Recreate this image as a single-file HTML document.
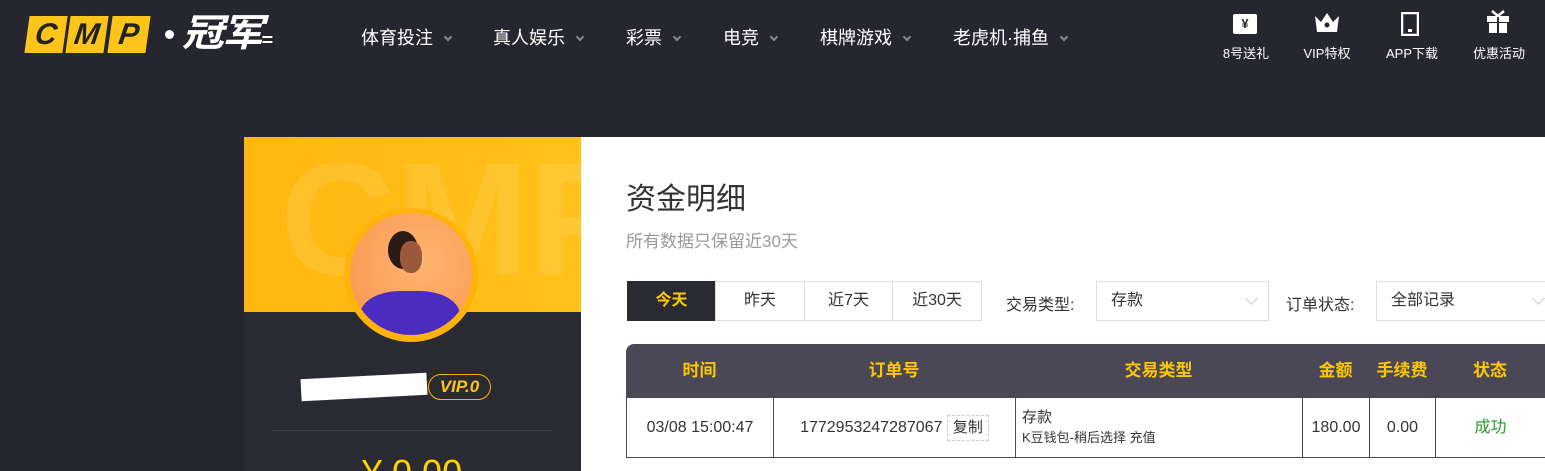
<!DOCTYPE html>
<html><head><meta charset="utf-8"><style>
*{margin:0;padding:0;box-sizing:border-box}
html,body{width:1545px;height:471px;overflow:hidden}
body{background:#262631;font-family:"Liberation Sans","Noto Sans CJK SC",sans-serif;position:relative}
.a{position:absolute}
.nav{color:#fff;font-size:18px;top:24px}
.nav i{display:inline-block;width:6px;height:6px;border-right:2px solid #8a8a96;border-bottom:2px solid #8a8a96;transform:rotate(45deg);margin-left:12px;position:relative;top:-4px}
.ic{color:#fff;font-size:13px;top:43px;text-align:center;width:80px}
.tab{top:281px;height:40px;border:1px solid #ddd;font-size:16px;text-align:center;line-height:38px;color:#333;background:#fff}
.sel{top:281px;height:40px;border:1px solid #ddd;font-size:16px;line-height:38px;color:#333;padding-left:14px;background:#fff}
.sel:after{content:"";position:absolute;right:12px;top:12px;width:8px;height:8px;border-right:1px solid #ccc;border-bottom:1px solid #ccc;transform:rotate(45deg)}
.th{top:344px;height:54px;line-height:54px;text-align:center;color:#ffc700;font-weight:bold;font-size:17px}
.td{top:398px;height:60px;border-left:1px solid #4a4857;border-bottom:1px solid #4a4857;font-size:16px;color:#333;text-align:center;line-height:60px}
.lb{position:absolute;top:16px;width:38px;height:37px;background:#ffc41a;transform:skewX(-8deg);font:italic 900 30px 'Liberation Sans',sans-serif;color:#222;line-height:37px;text-align:center}
</style></head><body>
<div class="lb" style="left:27px">C</div>
<div class="lb" style="left:68px">M</div>
<div class="lb" style="left:110px">P</div>
<div class="a" style="left:165px;top:30px;width:9px;height:9px;border-radius:50%;background:#fff"></div>
<div class="a" style="left:182px;top:12px;color:#fff;font-size:38px;font-weight:bold;font-style:italic;letter-spacing:-2px;line-height:44px;transform:scaleX(1.1);transform-origin:left">冠军<span style="font-size:18px;letter-spacing:0">=</span></div>
<div class="a nav" style="left:361px">体育投注<i></i></div>
<div class="a nav" style="left:493px">真人娱乐<i></i></div>
<div class="a nav" style="left:626px">彩票<i></i></div>
<div class="a nav" style="left:723px">电竞<i></i></div>
<div class="a nav" style="left:820px">棋牌游戏<i></i></div>
<div class="a nav" style="left:953px">老虎机·捕鱼<i></i></div>
<div class="a" style="left:1233px;top:14px;width:24px;height:20px;background:#fff;border-radius:2px;color:#262631;font-size:13px;text-align:center;line-height:20px;font-weight:bold">¥</div>
<svg class="a" style="left:1313px;top:10px" width="28" height="24"><path d="M2 6 L8 12 L14 3 L20 12 L26 6 L24 22 L4 22Z" fill="#fff"/><circle cx="14" cy="15" r="2.5" fill="#262631"/></svg>
<svg class="a" style="left:1401px;top:12px" width="18" height="24"><rect x="1" y="1" width="16" height="22" fill="none" stroke="#fff" stroke-width="2.5"/><rect x="7" y="17" width="4" height="3" fill="#fff"/></svg>
<svg class="a" style="left:1486px;top:10px" width="24" height="24"><rect x="1" y="6" width="22" height="6" fill="#fff"/><rect x="3" y="13" width="18" height="10" fill="#fff"/><rect x="11" y="6" width="2" height="18" fill="#262631"/><path d="M6 1 L12 6 L18 1" stroke="#fff" stroke-width="2.5" fill="none"/></svg>
<div class="a ic" style="left:1206px">8号送礼</div>
<div class="a ic" style="left:1287px">VIP特权</div>
<div class="a ic" style="left:1372px">APP下载</div>
<div class="a ic" style="left:1459px">优惠活动</div>
<div class="a" style="left:244px;top:137px;width:337px;height:334px;background:#2a2a33"></div>
<div class="a" style="left:244px;top:137px;width:337px;height:175px;background:linear-gradient(90deg,#ffb70f,#ffc21c);overflow:hidden"><div style="position:absolute;left:36px;top:-10px;font:bold 160px 'Liberation Sans',sans-serif;color:rgba(255,255,255,.1)">CMP</div></div>
<div class="a" style="left:344px;top:208px;width:134px;height:134px;border-radius:50%;background:#ffb20a"></div>
<div class="a" style="left:350px;top:213px;width:122px;height:122px;border-radius:50%;background:radial-gradient(circle at 60% 40%,#ffb470,#f7944c);overflow:hidden">
<div style="position:absolute;left:38px;top:18px;width:30px;height:38px;border-radius:50%;background:#2a1a14"></div>
<div style="position:absolute;left:50px;top:28px;width:22px;height:32px;border-radius:45%;background:#9a5a3a"></div>
<div style="position:absolute;left:10px;top:78px;width:100px;height:60px;border-radius:40% 40% 0 0;background:#4a2dc0"></div></div>
<div class="a" style="left:301px;top:376px;width:126px;height:22px;background:#fff;transform:rotate(-3deg)"></div>
<div class="a" style="left:428px;top:374px;width:63px;height:26px;border:1px solid #ffb20a;border-radius:13px;color:#ffc41a;font:italic bold 17px 'Liberation Sans',sans-serif;text-align:center;line-height:24px">VIP.0</div>
<div class="a" style="left:272px;top:430px;width:281px;height:1px;background:#3d3d48"></div>
<div class="a" style="left:362px;top:452px;color:#ffd200;font-size:36px">¥ 0.00</div>
<div class="a" style="left:581px;top:137px;width:964px;height:334px;background:#fff"></div>
<div class="a" style="left:626px;top:174px;font-size:30px;color:#333">资金明细</div>
<div class="a" style="left:626px;top:227px;font-size:17px;color:#999">所有数据只保留近30天</div>
<div class="a tab" style="left:627px;width:89px;background:#2a2a33;color:#ffc700;border-color:#2a2a33;font-weight:bold">今天</div>
<div class="a tab" style="left:715px;width:90px">昨天</div>
<div class="a tab" style="left:804px;width:89px">近7天</div>
<div class="a tab" style="left:892px;width:90px">近30天</div>
<div class="a" style="left:1006px;top:291px;font-size:16px;color:#333">交易类型:</div>
<div class="a sel" style="left:1096px;width:173px">存款</div>
<div class="a" style="left:1286px;top:291px;font-size:16px;color:#333">订单状态:</div>
<div class="a sel" style="left:1376px;width:180px">全部记录</div>
<div class="a" style="left:626px;top:344px;width:930px;height:54px;background:#4a4857;border-radius:8px 8px 0 0"></div>
<div class="a th" style="left:626px;width:147px">时间</div>
<div class="a th" style="left:773px;width:242px">订单号</div>
<div class="a th" style="left:1015px;width:287px">交易类型</div>
<div class="a th" style="left:1302px;width:67px">金额</div>
<div class="a th" style="left:1369px;width:66px">手续费</div>
<div class="a th" style="left:1435px;width:110px">状态</div>
<div class="a td" style="left:626px;width:147px">03/08 15:00:47</div>
<div class="a td" style="left:773px;width:242px">1772953247287067 <span style="display:inline-block;border:1px dashed #ccc;line-height:24px;padding:0 5px;font-size:15px">复制</span></div>
<div class="a td" style="left:1015px;width:287px;text-align:left;padding:10px 6px;line-height:20px"><div style="font-size:15px">存款</div><div style="font-size:13px">K豆钱包-稍后选择 充值</div></div>
<div class="a td" style="left:1302px;width:67px">180.00</div>
<div class="a td" style="left:1369px;width:66px">0.00</div>
<div class="a td" style="left:1435px;width:120px;color:#2a9a2a;padding-right:10px">成功</div>
</body></html>
